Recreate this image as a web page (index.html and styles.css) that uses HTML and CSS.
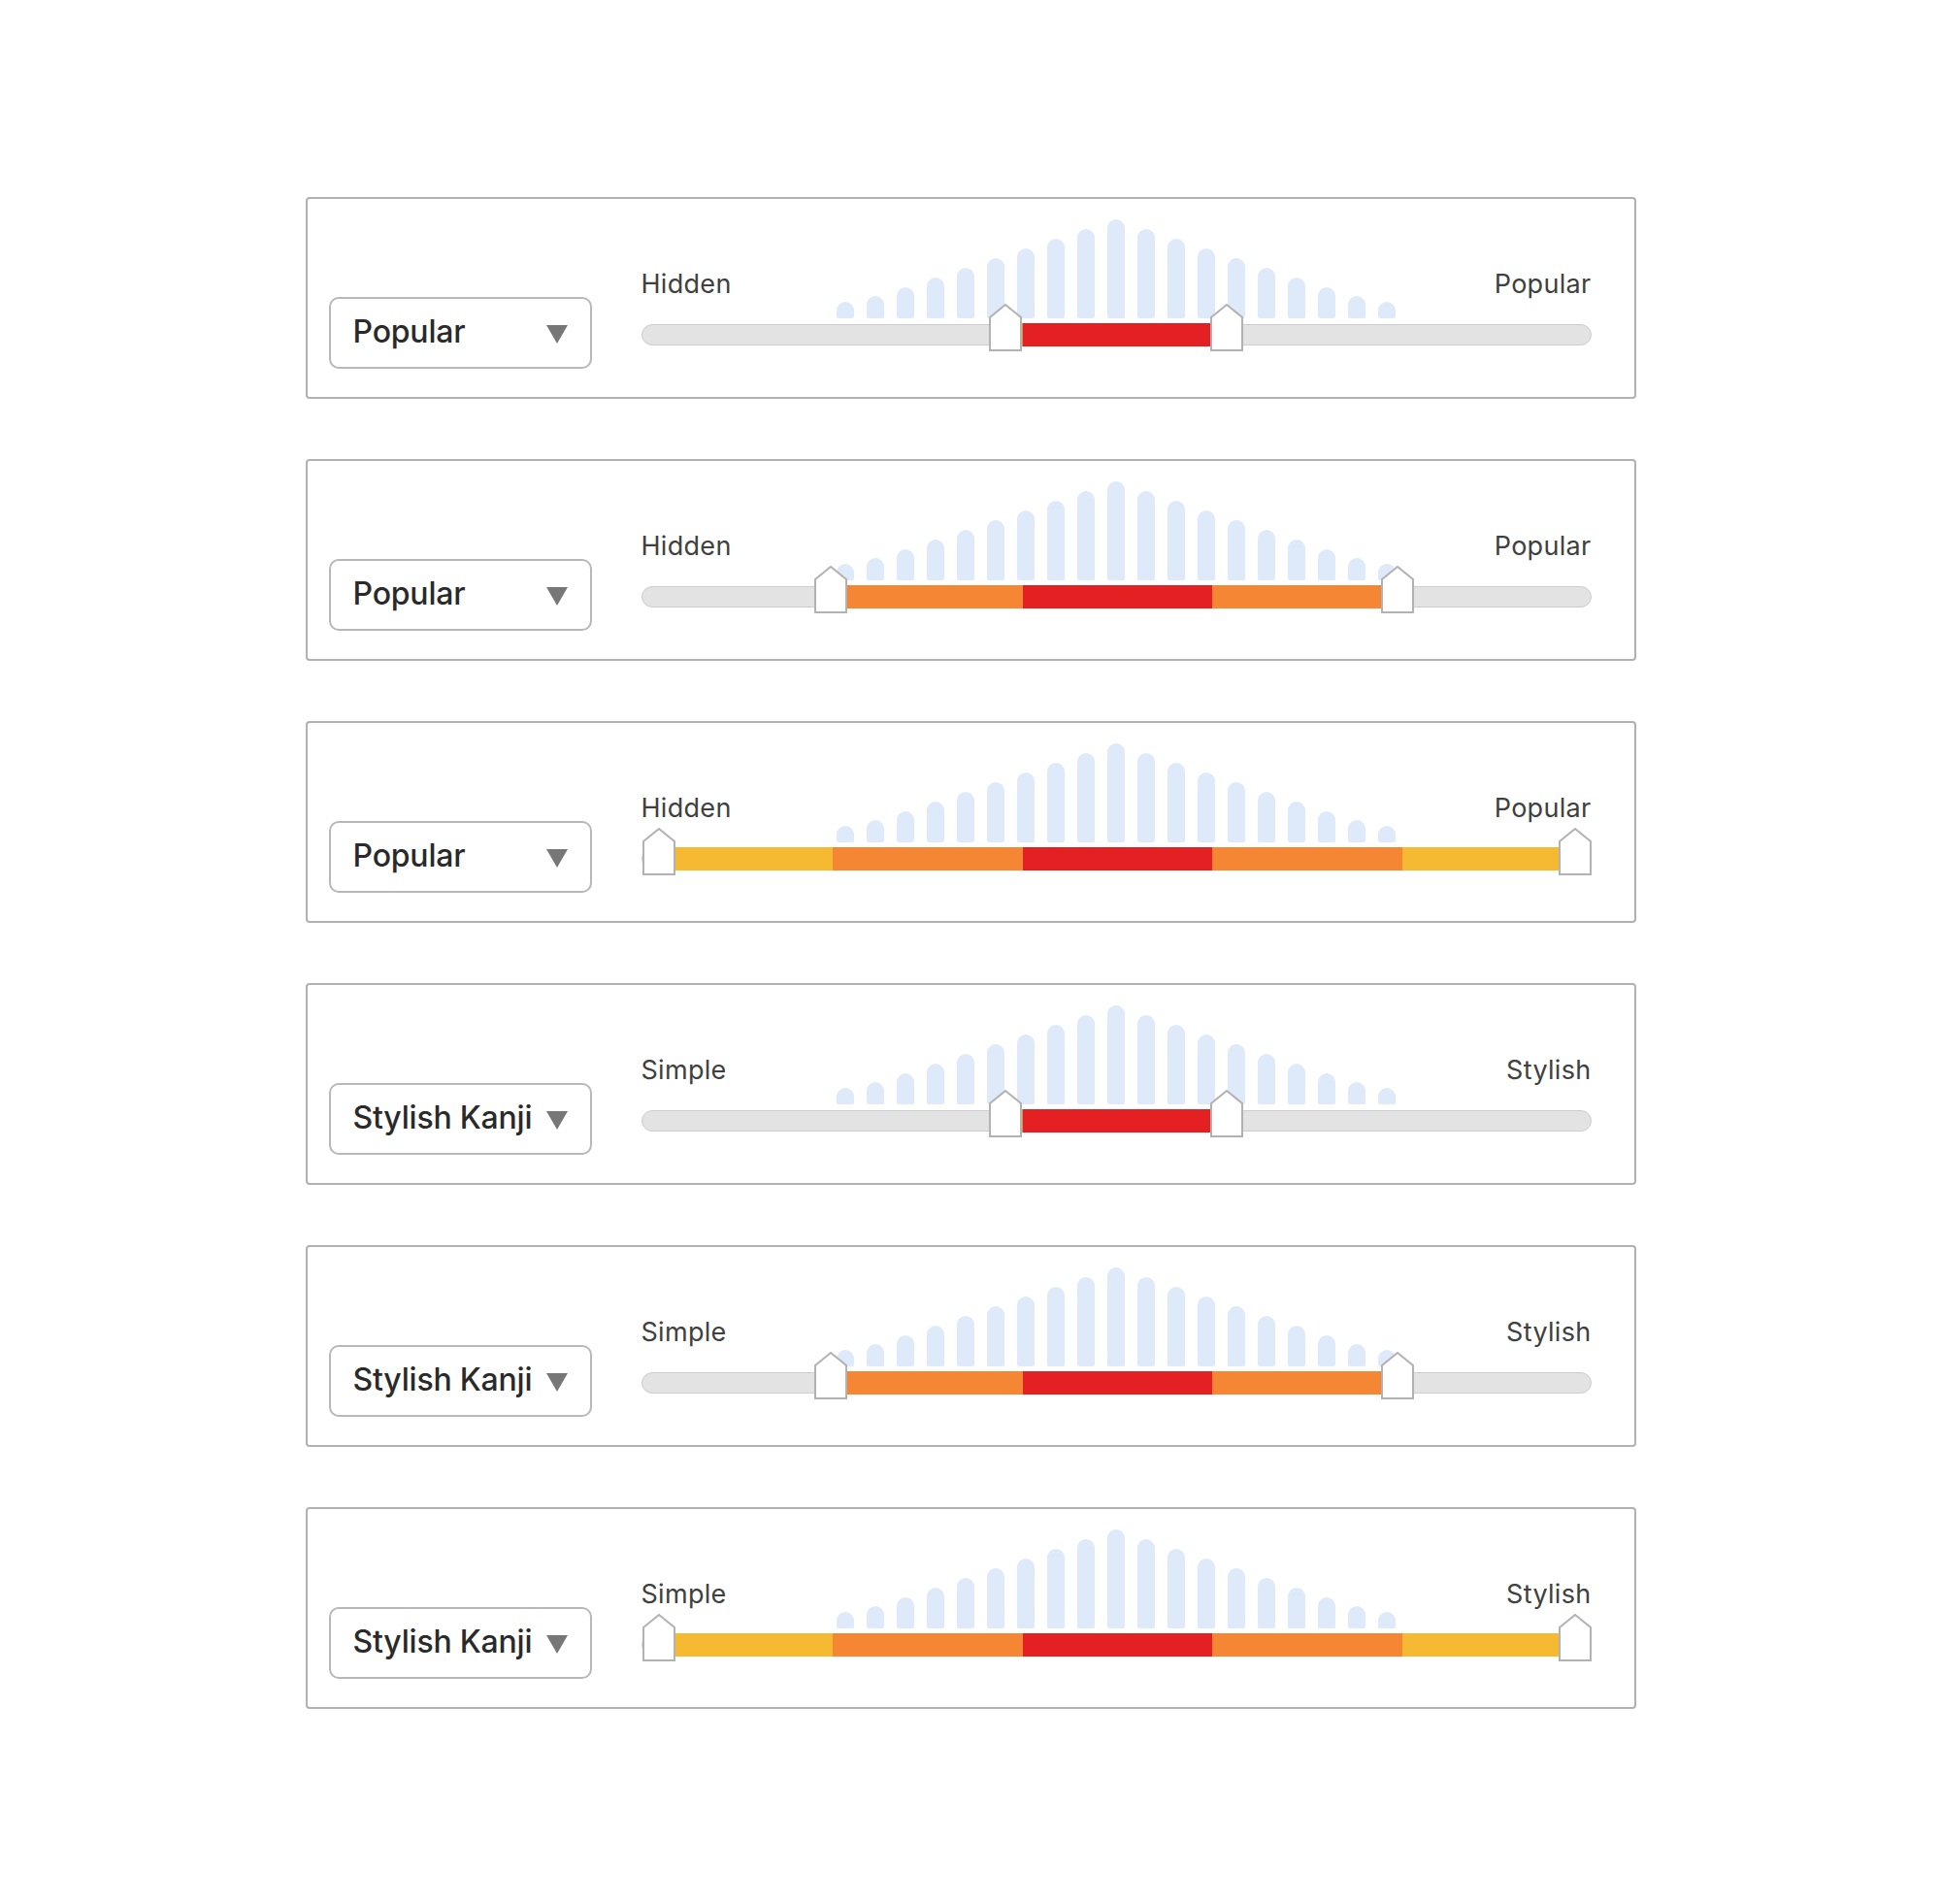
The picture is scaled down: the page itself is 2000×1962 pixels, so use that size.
FILE: index.html
```html
<!DOCTYPE html>
<html lang="en">
<head>
    <meta charset="UTF-8">
    <meta name="viewport" content="width=device-width, initial-scale=1.0">
    <title>Kanji Filters</title>
    <link rel="stylesheet" href="styles.css">
</head>
<body>
    <div class="list">
        <div class="card">
            <div class="select"><span>Popular</span><span class="caret"></span></div>
            <div class="slider" data-from="357" data-to="585">
                <div class="head">
                    <span class="label">Hidden</span>
                    <div class="bars"></div>
                    <span class="label right">Popular</span>
                </div>
                <div class="track"></div>
            </div>
        </div>
        <div class="card">
            <div class="select"><span>Popular</span><span class="caret"></span></div>
            <div class="slider" data-from="177" data-to="761">
                <div class="head">
                    <span class="label">Hidden</span>
                    <div class="bars"></div>
                    <span class="label right">Popular</span>
                </div>
                <div class="track"></div>
            </div>
        </div>
        <div class="card">
            <div class="select"><span>Popular</span><span class="caret"></span></div>
            <div class="slider" data-from="0" data-to="944">
                <div class="head">
                    <span class="label">Hidden</span>
                    <div class="bars"></div>
                    <span class="label right">Popular</span>
                </div>
                <div class="track"></div>
            </div>
        </div>
        <div class="card">
            <div class="select"><span>Stylish Kanji</span><span class="caret"></span></div>
            <div class="slider" data-from="357" data-to="585">
                <div class="head">
                    <span class="label">Simple</span>
                    <div class="bars"></div>
                    <span class="label right">Stylish</span>
                </div>
                <div class="track"></div>
            </div>
        </div>
        <div class="card">
            <div class="select"><span>Stylish Kanji</span><span class="caret"></span></div>
            <div class="slider" data-from="177" data-to="761">
                <div class="head">
                    <span class="label">Simple</span>
                    <div class="bars"></div>
                    <span class="label right">Stylish</span>
                </div>
                <div class="track"></div>
            </div>
        </div>
        <div class="card">
            <div class="select"><span>Stylish Kanji</span><span class="caret"></span></div>
            <div class="slider" data-from="0" data-to="944">
                <div class="head">
                    <span class="label">Simple</span>
                    <div class="bars"></div>
                    <span class="label right">Stylish</span>
                </div>
                <div class="track"></div>
            </div>
        </div>
    </div>

    <script>
        const heights = [17, 23, 32, 42, 52, 62, 72, 82, 92, 102, 92, 82, 72, 62, 52, 42, 32, 23, 17];
        const thumbSvg = '<svg width="34" height="49" viewBox="0 0 34 49"><polygon points="1,14 17,1 33,14 33,48 1,48" fill="#fff" stroke="#b2b2b2" stroke-width="2"/></svg>';

        document.querySelectorAll('.slider').forEach(slider => {
            const bars = slider.querySelector('.bars');
            heights.forEach(h => {
                const bar = document.createElement('div');
                bar.className = 'bar';
                bar.style.height = h + 'px';
                bars.appendChild(bar);
            });

            const track = slider.querySelector('.track');
            const from = parseInt(slider.dataset.from);
            const to = parseInt(slider.dataset.to);

            const fill = document.createElement('div');
            fill.className = 'fill';
            fill.style.left = (from + 34) + 'px';
            fill.style.width = (to - from - 34) + 'px';
            fill.style.backgroundPosition = -(from + 34) + 'px 0';
            track.appendChild(fill);

            [from, to].forEach(x => {
                const thumb = document.createElement('div');
                thumb.className = 'thumb';
                thumb.style.left = x + 'px';
                thumb.innerHTML = thumbSvg;
                track.appendChild(thumb);
            });
        });
    </script>
</body>
</html>
```

FILE: styles.css
```css
body {
    margin: 0;
    padding: 0;
    background: #fff;
    font-family: 'Inter', 'Noto Sans', sans-serif;
    color: #333;
}
.list {
    width: 1371px;
    margin: 0 auto;
    padding-top: 203px;
    display: flex;
    flex-direction: column;
    gap: 62px;
}
.card {
    box-sizing: border-box;
    height: 208px;
    border: 2px solid #b1b1b1;
    border-radius: 4px;
    padding: 21px 0 0 22px;
    display: flex;
    align-items: flex-start;
}
.select {
    box-sizing: border-box;
    width: 271px;
    height: 74px;
    margin-top: 80px;
    padding: 0 23px 4px 23px;
    border: 2px solid #b8b8b8;
    border-radius: 10px;
    display: flex;
    align-items: center;
    justify-content: space-between;
    font-size: 32px;
    font-weight: 500;
    letter-spacing: -0.2px;
    color: #2a2a2a;
}
.caret {
    width: 0;
    height: 0;
    margin-top: 6px;
    border-left: 11px solid transparent;
    border-right: 11px solid transparent;
    border-top: 19px solid #777;
}
.slider {
    width: 979px;
    margin-left: 51px;
}
.head {
    display: grid;
    grid-template-columns: 1fr auto 1fr;
    align-items: end;
}
.label {
    font-size: 27px;
    line-height: 27px;
    color: #404040;
    margin-bottom: 22px;
    letter-spacing: 0.3px;
}
.label.right {
    text-align: right;
}
.bars {
    display: flex;
    align-items: flex-end;
    gap: 13px;
    height: 102px;
}
.bar {
    width: 18px;
    background: #deeaf9;
    border-radius: 9px 9px 2px 2px;
}
.track {
    position: relative;
    box-sizing: border-box;
    height: 22px;
    margin-top: 6px;
    background: #e3e3e3;
    border: 1px solid #cdcdcd;
    border-radius: 11px;
}
.fill {
    position: absolute;
    top: -2px;
    height: 24px;
    background: linear-gradient(to right,
        #f6b932 0 20%, #f58634 20% 40%, #e52023 40% 60%, #f58634 60% 80%, #f6b932 80% 100%);
    background-size: 979px 100%;
}
.thumb {
    position: absolute;
    top: -22px;
    width: 34px;
    height: 49px;
}
.thumb svg {
    display: block;
}
```
